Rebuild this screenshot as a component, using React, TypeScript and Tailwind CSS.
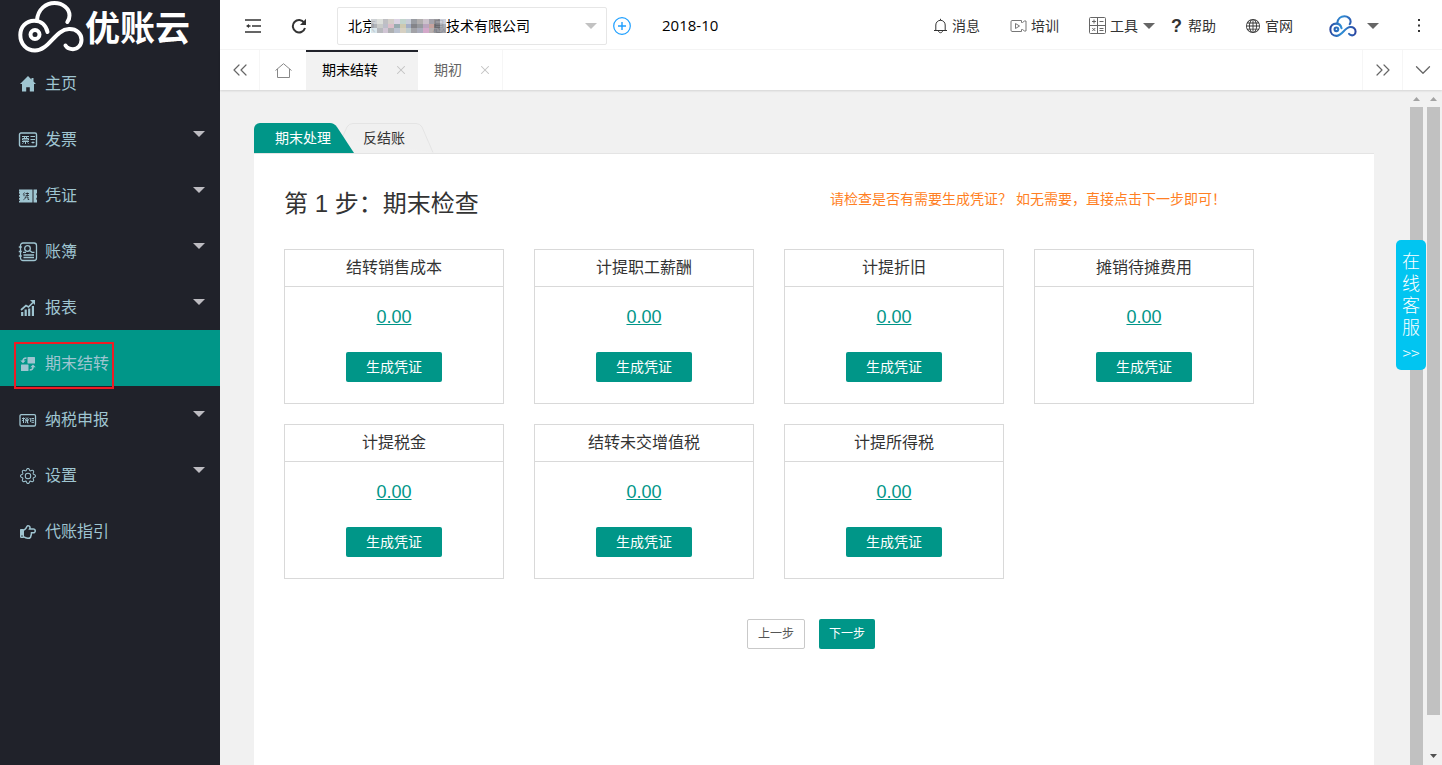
import { useState, type ReactNode } from "react";
import { ChevronDown, ChevronsLeft, ChevronsRight, X } from "lucide-react";
import { BsGear, BsGlobe } from "react-icons/bs";
import { FaRegHandPointRight } from "react-icons/fa";

type MenuItem = {
  label: string;
  icon: ReactNode;
  expandable?: boolean;
  marked?: boolean;
};

const HomeIcon = () => (
  <svg width="16" height="16" viewBox="0 0 16 16" fill="currentColor">
    <path d="M8 0 0 8h2v7.500h4.200v-4.300h3.600v4.300H14V8h2l-2.500-2.500V2h-2v1.500z" />
  </svg>
);

const InvoiceIcon = () => (
  <svg width="20" height="16" viewBox="0 0 20 16" fill="none" stroke="currentColor">
    <rect x="1.500" y="1" width="17" height="13.500" rx="1.500" strokeWidth="1.400" />
    <path d="M4 4.500h7M4.500 6.500h6V8h-6zM6.500 4.500v2M8.500 4.500v2M4 9.500h7M7.500 9.500v2.500M5.500 10.500l-1 1.200M9.500 10.500l1 1.200M12.500 4.500H17M12.500 7.500H17M15 9.500v2M13.500 10.500h3" />
  </svg>
);

const VoucherIcon = () => (
  <svg width="20" height="16" viewBox="0 0 20 16">
    <path
      fill="currentColor"
      d="M1 1.500h13.500v13H1v-1.700h1v-1H1v-2h1v-1H1v-2h1v-1H1v-2h1V3.500H1zM15.500 1.500H19v3.500a1.500 1.500 0 0 0 0 2.500v2a1.500 1.500 0 0 0 0 2.500v2.500h-3.500z"
    />
    <path
      d="m6.500 4.500-1.300 1.800M6 6v2.200M7.500 5.500h3.500M9.300 4.500v3M7.700 7.500H11M7 9h3v2.500h1.200M7.300 9c0 1.400-.5 2.200-1.800 2.700"
      fill="none"
      stroke="#20222a"
      strokeWidth=".8"
    />
  </svg>
);

const LedgerIcon = () => (
  <svg width="20" height="20" viewBox="0 0 20 20" fill="none" stroke="currentColor" strokeWidth="1.300">
    <rect x="2.500" y="1" width="16" height="17.500" rx="2.500" />
    <circle cx="9.500" cy="6.500" r="2.800" />
    <path d="m11.500 8.500 2.500 1.800h2.500M5 10.300h3M5.500 13h10.500M5.500 15.500h10.500M.8 5h3M.8 9.500h3M.8 14h3" />
  </svg>
);

const ReportIcon = () => (
  <svg width="16" height="16" viewBox="0 0 16 16" fill="none" stroke="currentColor">
    <path d="m1 10 5-4.500 2.500 1.500 4.500-4.500" strokeWidth="1.700" />
    <path d="M10 0h5v5z" fill="currentColor" stroke="none" />
    <path d="M2.200 16v-4M5.700 16v-6.500M9.200 16V8.500M12.900 16V6" strokeWidth="2.200" />
  </svg>
);

const TransferIcon = () => (
  <svg width="16" height="16" viewBox="0 0 16 16" fill="currentColor">
    <rect x="7.500" y="1" width="7.500" height="6.500" rx=".5" />
    <rect x="1" y="8.500" width="7.500" height="6.500" rx=".5" />
    <path d="M6.500 2C4 2 3 3 3 5M9.700 14c2.300 0 3.300-1 3.300-3.300" fill="none" stroke="currentColor" strokeWidth="1.600" />
    <path d="M.3 4.500h5.400L3 7.300zM10.300 11.300h5.400L13 8.500z" />
  </svg>
);

const TaxIcon = () => (
  <svg width="18" height="13" viewBox="0 0 18 13" fill="none" stroke="currentColor">
    <rect x="1" y=".7" width="15.500" height="11.300" rx="1.300" strokeWidth="1.300" />
    <path d="M3 4.500h3M4.500 3.500v5.500M3.200 7l1.300-1.500M7 3.500l.7 1M9 3.500l-.6 1M6.700 5h2.500v1.500H6.700zM7.300 6.500 6.500 9M8.500 6.500V9h1M10.500 4.500h1.200V8M12.500 4.500h2.500M12.500 6.300h2.500M12.500 8.300h2.500" />
  </svg>
);

const menu: MenuItem[] = [
  { label: "主页", icon: <HomeIcon /> },
  { label: "发票", icon: <InvoiceIcon />, expandable: true },
  { label: "凭证", icon: <VoucherIcon />, expandable: true },
  { label: "账簿", icon: <LedgerIcon />, expandable: true },
  { label: "报表", icon: <ReportIcon />, expandable: true },
  { label: "期末结转", icon: <TransferIcon />, marked: true },
  { label: "纳税申报", icon: <TaxIcon />, expandable: true },
  { label: "设置", icon: <BsGear size={16} />, expandable: true },
  { label: "代账指引", icon: <FaRegHandPointRight size={16} /> },
];

const checks = [
  { title: "结转销售成本", amount: "0.00" },
  { title: "计提职工薪酬", amount: "0.00" },
  { title: "计提折旧", amount: "0.00" },
  { title: "摊销待摊费用", amount: "0.00" },
  { title: "计提税金", amount: "0.00" },
  { title: "结转未交增值税", amount: "0.00" },
  { title: "计提所得税", amount: "0.00" },
];

const mosaic = [
  ["#c9cdd0", "#d9dcd8", "#b9b9bd", "#cfc9c4", "#d8cfe0", "#bcd0c8", "#c4c8d4", "#8f9298", "#a9a6a6", "#c6bcc6", "#9b9aa2", "#8d8d93", "#c8ccd6"],
  ["#a8abb0", "#c4c6c4", "#b5b7c4", "#d9b8c4", "#8fa2a8", "#c8c4a8", "#9aa6c0", "#77777d", "#8c8f94", "#b49cb8", "#c09a94", "#6f7075", "#a2a8b0"],
  ["#d6e4ea", "#b0b2b6", "#cbbfd0", "#a6a8aa", "#b4bccc", "#d2ccbc", "#b8c6c8", "#98989e", "#a0a4b4", "#cf9fc4", "#b0a8a8", "#8a8b92", "#9b9ca4"],
];

function CloudMark({ width, height, color, strokeWidth = 4 }: { width: number; height: number; color: string; strokeWidth?: number }) {
  return (
    <svg width={width} height={height} viewBox="17 0 68 53" fill="none" stroke={color} strokeWidth={strokeWidth} strokeLinecap="round">
      <defs>
        <linearGradient id="cloud-blue" x1="17" y1="0" x2="85" y2="0" gradientUnits="userSpaceOnUse">
          <stop offset="0" stopColor="#27419b" />
          <stop offset=".45" stopColor="#2f8fd6" />
          <stop offset="1" stopColor="#2b3f9c" />
        </linearGradient>
      </defs>
      <path d="M37 20C38 9 46 3 54.500 3 63 3 69.500 9 69.500 15.500c0 2.800-.7 4.700-2.200 6.500" />
      <path d="M47.500 32c-1.500-7-6.500-11.300-13.300-11.300C26 20.700 20.300 27 20.300 35c0 9 6.200 15.500 14.700 15.500C49 50.500 55 29.500 69 29c7.500-.3 12.500 4.500 12.500 10.700 0 5.500-4 9.500-8.500 9.500-3.500 0-6-1.300-7.500-3.700" />
      <circle cx="35" cy="34.500" r="4.500" />
    </svg>
  );
}

function Caret({ className = "" }: { className?: string }) {
  return (
    <svg width="12" height="6" viewBox="0 0 12 6" className={className} fill="currentColor">
      <path d="M0 0h12L6 6z" />
    </svg>
  );
}

function Sidebar() {
  const [active, setActive] = useState("期末结转");

  return (
    <aside className="w-[220px] shrink-0 bg-[#20222a] text-[#9fc5d1]">
      <div className="flex h-[50px] items-center pl-[17px] pt-[3px]">
        <CloudMark width={68} height={53} color="#ffffff" />
        <span className="pt-1 text-[35px] leading-[50px] font-bold text-white">优账云</span>
      </div>
      <nav>
        {menu.map((item) => (
          <a
            key={item.label}
            href="#"
            onClick={() => setActive(item.label)}
            className={`relative flex h-14 items-center pl-[17px] pr-[15px] ${active === item.label ? "bg-[#009688]" : ""}`}
          >
            <span className="flex flex-1 items-center gap-[6px] pt-3">
              <span className="flex w-[22px] justify-center">{item.icon}</span>
              <span className="text-base leading-6">{item.label}</span>
            </span>
            {item.expandable && <Caret className="text-[#bdbcc1]" />}
            {item.marked && <span className="absolute left-[14px] top-3 z-10 h-[47px] w-[100px] border-2 border-[#ed1c24]" />}
          </a>
        ))}
      </nav>
    </aside>
  );
}

function Header() {
  return (
    <header className="flex h-[50px] items-center border-b border-[#f6f6f6] bg-white pl-6 pr-[19px] pt-[2px] text-sm text-[#333]">
      <button aria-label="收起菜单" className="flex w-[18px] justify-center">
        <svg width="16" height="14" viewBox="0 0 16 14" fill="none" stroke="#333" strokeWidth="1.500">
          <path d="M0 1h16M7 7h9M0 13h16" />
          <path d="M1 7l3-2v1.300h1.500v1.400H4V9z" fill="#333" stroke="none" />
        </svg>
      </button>
      <button aria-label="刷新" className="ml-7 flex w-[18px] justify-center">
        <svg width="16" height="16" viewBox="0 0 16 16">
          <path d="M13.200 4.800A6.200 6.200 0 1 0 14 10" fill="none" stroke="#333" strokeWidth="2" />
          <path d="M15 .8v6.200H9z" fill="#333" />
        </svg>
      </button>
      <div className="relative ml-[29px]">
        <select
          aria-label="公司"
          className="h-[38px] w-[270px] appearance-none rounded-xs border border-[#e6e6e6] bg-white pl-[10px] text-sm text-black"
        >
          <option>北京　　　　息技术有限公司</option>
        </select>
        <svg width="75" height="14" viewBox="0 0 13 3" preserveAspectRatio="none" className="absolute left-[34px] top-3 opacity-90" shapeRendering="crispEdges">
          {mosaic.map((row, y) => row.map((fill, x) => <rect key={`${x}-${y}`} x={x} y={y} width="1" height="1" fill={fill} />))}
        </svg>
        <Caret className="pointer-events-none absolute right-[10px] top-4 text-[#c2c2c2]" />
      </div>
      <button aria-label="新增" className="ml-[6px]">
        <svg width="18" height="18" viewBox="0 0 18 18" fill="none" stroke="#1e9fff">
          <circle cx="9" cy="9" r="8.300" strokeWidth="1.200" />
          <path d="M5 9h8M9 5v8" strokeWidth="1.400" />
        </svg>
      </button>
      <span className="ml-[31px] font-['Open_Sans',sans-serif] text-[15px] text-black">2018-10</span>

      <div className="ml-auto flex items-center gap-[30px]">
        <a href="#" className="flex items-center gap-1">
          <svg width="15" height="16" viewBox="0 0 15 16" fill="none" stroke="#333">
            <path d="M1 12.500h13M2.800 12.500V7a4.700 4.700 0 0 1 9.400 0v5.500M7.500 2.300V.8M5.500 13c.3 2.300 3.700 2.300 4 0" />
          </svg>
          消息
        </a>
        <a href="#" className="flex items-center gap-1">
          <svg width="17" height="14" viewBox="0 0 17 14" fill="none" stroke="#777">
            <path d="M2 1.500h9.500v2h1L14.500 2H16v10h-1.500l-2-1.500h-1v2H2a1.300 1.300 0 0 1-1-1.300V2.800c0-.8.4-1.300 1-1.300zM5.500 4.500v5L9.500 7z" />
          </svg>
          培训
        </a>
        <div className="flex items-center gap-4">
          <a href="#" className="flex items-center gap-1">
            <svg width="17" height="17" viewBox="0 0 17 17" fill="none" stroke="#666">
              <rect x=".5" y=".5" width="16" height="16" rx="1" />
              <path d="M8.500 1v15M1 8.500h15M3 4.500h4M5 2.500v4M10.500 4.500h4M3.300 11l3 3M6.300 11l-3 3M10.500 11.500h4M10.500 13.500h4" />
            </svg>
            工具
            <Caret className="ml-px text-[#666]" />
          </a>
          <a href="#" className="flex items-center gap-[6px]">
            <span className="text-lg leading-5 font-bold">?</span>
            帮助
          </a>
        </div>
        <a href="#" className="flex items-center gap-[5px]">
          <BsGlobe size={14} />
          官网
        </a>
        <button aria-label="账户" className="ml-[6px] flex items-center gap-[10px]">
          <CloudMark width={28} height={22} color="url(#cloud-blue)" strokeWidth={5} />
          <Caret className="text-[#666]" />
        </button>
        <button aria-label="更多" className="ml-[6px] flex w-2 justify-center">
          <svg width="2" height="13" viewBox="0 0 2 13" fill="#333">
            <path d="M0 0h2v2H0zM0 5.500h2v2H0zM0 11h2v2H0z" />
          </svg>
        </button>
      </div>
    </header>
  );
}

function TabBar() {
  return (
    <div className="relative flex h-10 bg-white text-sm text-[#666] shadow-[0_1px_2px_rgba(0,0,0,0.12)]">
      <button aria-label="向左" className="flex w-10 items-center justify-center border-r border-[#f6f6f6]">
        <ChevronsLeft size={24} strokeWidth={1.200} />
      </button>
      <a href="#" aria-label="首页" className="flex w-[46px] items-center justify-center">
        <svg width="17" height="15" viewBox="0 0 17 15" fill="none" stroke="#888">
          <path d="M.5 7.500 8.500.7l8 6.800M2.500 6v8.500h12V6" />
        </svg>
      </a>
      <div className="flex w-28 items-center justify-between border-t-2 border-[#20222a] bg-[#f2f2f2] pb-[2px] pl-4 pr-[10px] text-black">
        <a href="#">期末结转</a>
        <button aria-label="关闭期末结转" className="text-[#c2c2c2]">
          <X size={14} strokeWidth={1.800} />
        </button>
      </div>
      <div className="flex w-[85px] items-center justify-between border-r border-[#f6f6f6] pl-4 pr-[10px]">
        <a href="#">期初</a>
        <button aria-label="关闭期初" className="text-[#c2c2c2]">
          <X size={14} strokeWidth={1.800} />
        </button>
      </div>
      <button aria-label="向右" className="ml-auto flex w-10 items-center justify-center border-l border-[#f6f6f6]">
        <ChevronsRight size={24} strokeWidth={1.200} />
      </button>
      <button aria-label="展开" className="flex w-10 items-center justify-center border-l border-[#f6f6f6]">
        <ChevronDown size={26} strokeWidth={1.200} />
      </button>
    </div>
  );
}

function CheckCard({ title, amount }: { title: string; amount: string }) {
  return (
    <section className="border border-[#d9d9d9] text-center">
      <h3 className="border-b border-[#d9d9d9] text-base leading-9">{title}</h3>
      <div className="flex flex-col items-center pb-[21px] pt-4">
        <a href="#" className="text-lg leading-7 text-[#009688] underline">
          {amount}
        </a>
        <button className="mt-[21px] h-[30px] rounded-xs bg-[#009688] px-5 text-sm text-white">生成凭证</button>
      </div>
    </section>
  );
}

function PeriodTabs() {
  return (
    <div className="flex h-[30px] text-sm leading-[30px]">
      <button className="relative z-10 w-[100px] pl-[21px] text-left text-white">
        <svg width="100" height="30" viewBox="0 0 100 30" className="absolute inset-0 -z-10">
          <path d="M0 30V6a6 6 0 0 1 6-6h70q4 0 7 4l17 26z" fill="#009688" />
        </svg>
        期末处理
      </button>
      <button className="relative w-20 pl-[9px] text-left">
        <svg width="92" height="30" viewBox="0 0 92 30" className="absolute -left-3 top-0">
          <path d="M0 15 5 4q2-3.500 6-3.500h63q4 0 6 3.500l11 25.500" fill="#f0f0f0" stroke="#e4e4e4" />
        </svg>
        <span className="relative">反结账</span>
      </button>
    </div>
  );
}

function ScrollTrack({ short = false }: { short?: boolean }) {
  return (
    <div className="flex w-[17px] shrink-0 flex-col items-center bg-[#f1f1f1]">
      <svg width="7" height="4" viewBox="0 0 7 4" className="mb-[6px] mt-[7px] shrink-0" fill="#a3a3a3">
        <path d="M3.500 0 7 4H0z" />
      </svg>
      <div className={`w-[13px] bg-[#c1c1c1] ${short ? "h-9/10" : "flex-1"}`} />
      {short && (
        <svg width="7" height="4" viewBox="0 0 7 4" className="mb-[7px] mt-auto shrink-0" fill="#505050">
          <path d="M0 0h7L3.500 4z" />
        </svg>
      )}
    </div>
  );
}

export default function App() {
  return (
    <div className="flex h-screen overflow-hidden bg-[#f1f1f1] font-['Liberation_Sans','Noto_Sans_CJK_SC',sans-serif] text-[#333]">
      <Sidebar />
      <div className="flex min-w-0 flex-1 flex-col">
        <Header />
        <TabBar />
        <div className="flex min-h-0 flex-1">
          <main className="flex min-w-0 flex-1 flex-col px-[34px] pt-[33px]">
            <PeriodTabs />
            <div className="flex-1 border-t border-[#e4e4e4] bg-white px-[30px] pt-8">
              <div className="grid grid-cols-2">
                <h2 className="text-2xl leading-9">第 1 步：期末检查</h2>
                <p className="pl-4 pt-[3px] text-sm leading-5 text-[#ff7f24]">请检查是否有需要生成凭证？ 如无需要，直接点击下一步即可！</p>
              </div>
              <div className="mt-[27px] grid grid-cols-[repeat(auto-fill,220px)] gap-x-[30px] gap-y-5">
                {checks.map((check) => (
                  <CheckCard key={check.title} {...check} />
                ))}
              </div>
              <div className="mt-10 flex justify-center gap-[14px] pr-[6px] text-xs">
                <button className="h-[30px] rounded-xs border border-[#c9c9c9] bg-white px-[10px] text-[#555]">上一步</button>
                <button className="h-[30px] rounded-xs bg-[#009688] px-[10px] text-white">下一步</button>
              </div>
            </div>
          </main>
          <ScrollTrack />
          <ScrollTrack short />
        </div>
      </div>
      <button className="fixed right-4 top-60 flex h-[130px] w-[30px] flex-col items-center rounded-[5px] bg-[#01c5f1] pt-[11px] text-lg leading-[22px] font-light text-white">
        <span>在</span>
        <span>线</span>
        <span>客</span>
        <span>服</span>
        <span className="font-['Noto_Sans_CJK_SC',sans-serif] text-base leading-[26px]">&gt;&gt;</span>
      </button>
    </div>
  );
}
